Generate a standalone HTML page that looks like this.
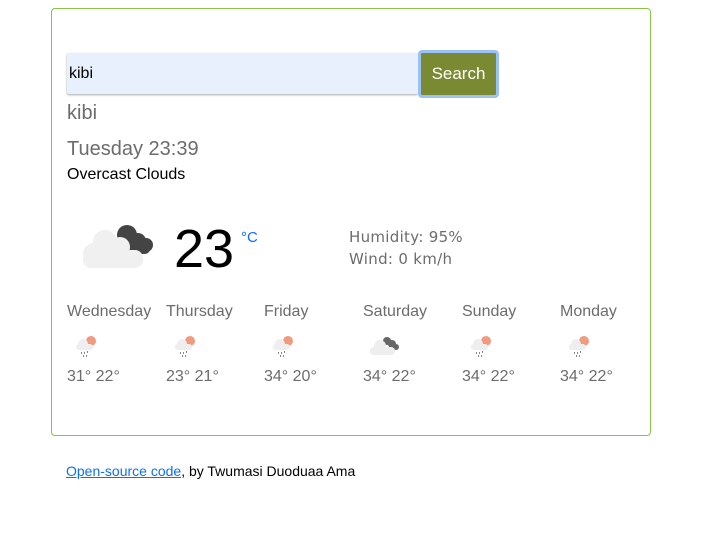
<!DOCTYPE html>
<html><head><meta charset="utf-8"><style>
body{margin:0;width:710px;height:560px;background:#fff;font-family:"Liberation Sans",Arial,sans-serif;position:relative}
.card{position:absolute;left:51px;top:8px;width:598px;height:426px;border:1px solid #8bc34a;border-radius:4px}
.abs{position:absolute}
.input{left:67px;top:53px;width:351px;height:41px;background:#e8f0fe;box-shadow:0 1px 2px rgba(0,0,0,.35);border-radius:2px}
.input span{position:absolute;left:2px;top:12px;font-size:16px;color:#000}
.btn{left:418px;top:50px;width:81px;height:48px;border:3px solid #9cc1f7;border-radius:4px;box-sizing:border-box;background:#7a8a32;color:#fff;font-size:17px;text-align:center;line-height:42px}
.grey{color:#6c6c6c}
.day{position:absolute;top:303px;font-size:16px;color:#6c6c6c}
.day .n{display:block}
.day svg{position:absolute;top:31px;left:8px}
.day .t{position:absolute;top:65px;white-space:nowrap}
</style></head><body>
<div class="card"></div>
<div class="abs input"><span>kibi</span></div>
<div class="abs btn">Search</div>
<div class="abs grey" style="left:67px;top:102px;font-size:20px">kibi</div>
<div class="abs grey" style="left:67px;top:138px;font-size:20px">Tuesday 23:39</div>
<div class="abs" style="left:67px;top:166px;font-size:16px;color:#000">Overcast Clouds</div>
<svg class="abs" style="left:80px;top:222px" width="75" height="48" viewBox="0 0 75 48">
<g fill="#444"><circle cx="47" cy="13" r="10"/><circle cx="58" cy="19" r="8"/><circle cx="66" cy="23" r="7"/><rect x="40" y="20" width="30" height="12" rx="5"/></g>
<g fill="#f0f0f0"><circle cx="25" cy="20" r="12"/><circle cx="40" cy="25" r="10"/><circle cx="14" cy="32" r="11"/><rect x="3" y="28" width="60" height="18" rx="8"/></g>
</svg>
<div class="abs" style="left:174px;top:221px;font-size:54px;color:#000;line-height:56px">23</div>
<div class="abs" style="left:241px;top:229px;font-size:15px;color:#0d6efd">°C</div>
<div class="abs" style="left:349px;top:226px;font-size:15px;color:#6c6c6c;font-family:'DejaVu Sans',sans-serif;line-height:22px;letter-spacing:0.3px">Humidity: 95%<br>Wind: 0 km/h</div>

<div class="day" style="left:67px"><span class="n">Wednesday</span><svg width="26" height="24" viewBox="0 0 26 24"><circle cx="16" cy="7" r="5" fill="#f09a7f"/><g fill="#eee"><circle cx="8" cy="10" r="5"/><rect x="1" y="10" width="17" height="6" rx="3"/></g><g fill="#888"><rect x="6" y="18" width="1" height="2"/><rect x="9" y="18" width="1" height="2"/><rect x="12" y="17" width="1" height="2"/><rect x="8" y="21" width="1" height="2"/><rect x="11" y="21" width="1" height="2"/></g></svg><span class="t">31° 22°</span></div>
<div class="day" style="left:166px"><span class="n">Thursday</span><svg width="26" height="24" viewBox="0 0 26 24"><circle cx="16" cy="7" r="5" fill="#f09a7f"/><g fill="#eee"><circle cx="8" cy="10" r="5"/><rect x="1" y="10" width="17" height="6" rx="3"/></g><g fill="#888"><rect x="6" y="18" width="1" height="2"/><rect x="9" y="18" width="1" height="2"/><rect x="12" y="17" width="1" height="2"/><rect x="8" y="21" width="1" height="2"/><rect x="11" y="21" width="1" height="2"/></g></svg><span class="t">23° 21°</span></div>
<div class="day" style="left:264px"><span class="n">Friday</span><svg width="26" height="24" viewBox="0 0 26 24"><circle cx="16" cy="7" r="5" fill="#f09a7f"/><g fill="#eee"><circle cx="8" cy="10" r="5"/><rect x="1" y="10" width="17" height="6" rx="3"/></g><g fill="#888"><rect x="6" y="18" width="1" height="2"/><rect x="9" y="18" width="1" height="2"/><rect x="12" y="17" width="1" height="2"/><rect x="8" y="21" width="1" height="2"/><rect x="11" y="21" width="1" height="2"/></g></svg><span class="t">34° 20°</span></div>
<div class="day" style="left:363px"><span class="n">Saturday</span><svg width="32" height="24" viewBox="0 0 32 24" style="left:5px"><g fill="#666"><circle cx="19" cy="7" r="4"/><circle cx="24" cy="10" r="4"/><circle cx="28" cy="13" r="3"/></g><g fill="#eee"><circle cx="12" cy="12" r="6"/><rect x="2" y="13" width="25" height="8" rx="4"/></g></svg><span class="t">34° 22°</span></div>
<div class="day" style="left:462px"><span class="n">Sunday</span><svg width="26" height="24" viewBox="0 0 26 24"><circle cx="16" cy="7" r="5" fill="#f09a7f"/><g fill="#eee"><circle cx="8" cy="10" r="5"/><rect x="1" y="10" width="17" height="6" rx="3"/></g><g fill="#888"><rect x="6" y="18" width="1" height="2"/><rect x="9" y="18" width="1" height="2"/><rect x="12" y="17" width="1" height="2"/><rect x="8" y="21" width="1" height="2"/><rect x="11" y="21" width="1" height="2"/></g></svg><span class="t">34° 22°</span></div>
<div class="day" style="left:560px"><span class="n">Monday</span><svg width="26" height="24" viewBox="0 0 26 24"><circle cx="16" cy="7" r="5" fill="#f09a7f"/><g fill="#eee"><circle cx="8" cy="10" r="5"/><rect x="1" y="10" width="17" height="6" rx="3"/></g><g fill="#888"><rect x="6" y="18" width="1" height="2"/><rect x="9" y="18" width="1" height="2"/><rect x="12" y="17" width="1" height="2"/><rect x="8" y="21" width="1" height="2"/><rect x="11" y="21" width="1" height="2"/></g></svg><span class="t">34° 22°</span></div>

<div class="abs" style="left:66px;top:463px;font-size:14px;color:#000"><a style="color:#0d6efd;text-decoration:underline">Open-source code</a>, by Twumasi Duoduaa Ama</div>
</body></html>
